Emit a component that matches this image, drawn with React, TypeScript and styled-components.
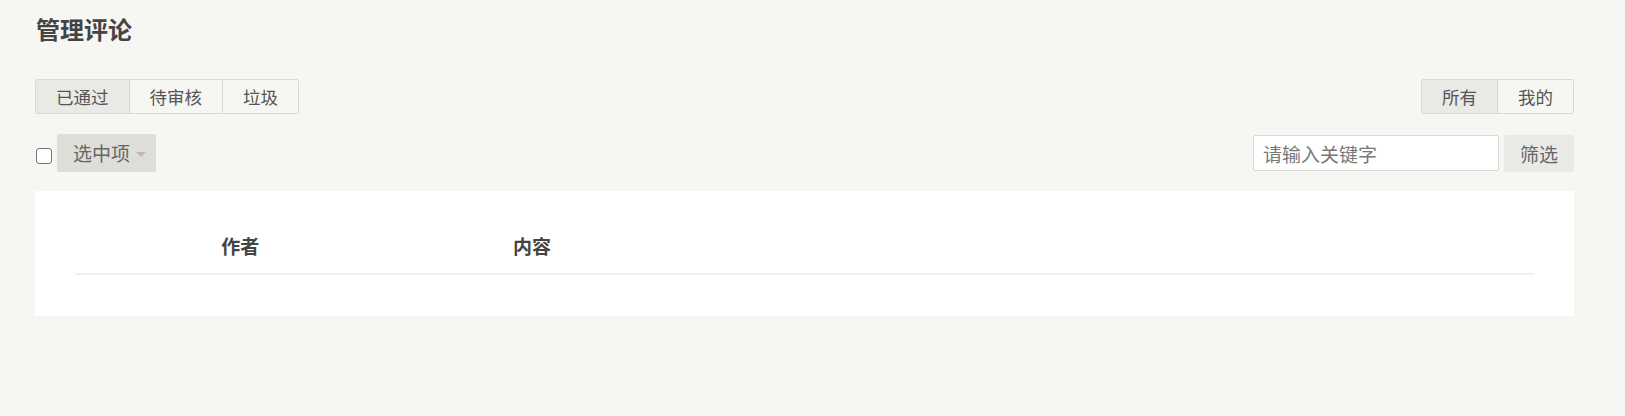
import React from "react";
import styled, { createGlobalStyle } from "styled-components";

const GlobalStyle = createGlobalStyle`
  html, body {
    margin: 0;
    padding: 0;
    background: #f6f6f3;
  }
  body {
    font-family: "Noto Sans CJK SC", "Noto Sans", sans-serif;
    color: #444;
  }
`;

const Page = styled.div`
  padding: 17px 51px 0 35px;
`;

const Title = styled.h2`
  margin: 0;
  font-size: 24px;
  line-height: 24px;
  font-weight: bold;
  color: #444;
  padding-left: 1px;
`;

const Toolbar = styled.div<{ $top: number; $height: number }>`
  display: flex;
  align-items: center;
  justify-content: space-between;
  margin-top: ${({ $top }) => $top}px;
  height: ${({ $height }) => $height}px;
`;

const Group = styled.div`
  display: flex;
  align-items: center;
  gap: 5px;
`;

const Tabs = styled.ul`
  display: flex;
  margin: 0;
  padding: 0;
  list-style: none;
  border: 1px solid #d9d9d6;
  border-radius: 2px;
  overflow: hidden;
`;

const Tab = styled.li<{ $active?: boolean }>`
  padding: 0 20px;
  height: 33px;
  line-height: 33px;
  font-size: 17.5px;
  color: #555;
  background: ${({ $active }) => ($active ? "#e9e9e6" : "#f6f6f3")};
  & + & {
    border-left: 1px solid #d9d9d6;
  }
`;

const CheckBox = styled.input`
  appearance: none;
  margin: 6px 0 0 1px;
  width: 16px;
  height: 16px;
  border: 1px solid #767676;
  border-radius: 3px;
  background: #fff;
  box-sizing: border-box;
`;

const DropButton = styled.button`
  display: flex;
  align-items: center;
  gap: 6px;
  height: 38px;
  padding: 0 10px 0 16px;
  border: none;
  border-radius: 2px;
  background: #deded9;
  color: #666;
  font-family: inherit;
  font-size: 19px;
  line-height: 38px;
`;

const Caret = styled.span`
  width: 0;
  height: 0;
  border-left: 5px solid transparent;
  border-right: 5px solid transparent;
  border-top: 5px solid #bbb;
  margin-top: 2px;
`;

const SearchInput = styled.input`
  box-sizing: border-box;
  width: 246px;
  height: 36px;
  padding: 0 9px;
  border: 1px solid #d9d9d6;
  border-radius: 2px;
  background: #fff;
  font-family: inherit;
  font-size: 19px;
  color: #444;
  outline: none;
  &::placeholder {
    color: #777;
  }
`;

const Button = styled.button`
  height: 37px;
  padding: 0 16px;
  border: none;
  border-radius: 2px;
  background: #e9e9e6;
  color: #666;
  font-family: inherit;
  font-size: 19px;
  line-height: 37px;
`;

const Panel = styled.div`
  margin-top: 19px;
  background: #fff;
  padding: 26px 40px 41px;
`;

const Table = styled.table`
  width: 100%;
  border-collapse: collapse;
  table-layout: fixed;
`;

const Th = styled.th`
  height: 56px;
  padding: 0 15px;
  text-align: left;
  font-size: 19px;
  font-weight: bold;
  color: #444;
  border-bottom: 2px solid #f0f0ec;
`;

export default function App() {
  return (
    <>
      <GlobalStyle />
      <Page>
        <Title>管理评论</Title>

        <Toolbar $top={38} $height={35}>
          <Tabs>
            <Tab $active>已通过</Tab>
            <Tab>待审核</Tab>
            <Tab>垃圾</Tab>
          </Tabs>
          <Tabs>
            <Tab $active>所有</Tab>
            <Tab>我的</Tab>
          </Tabs>
        </Toolbar>

        <Toolbar $top={20} $height={38}>
          <Group>
            <CheckBox type="checkbox" />
            <DropButton>
              选中项
              <Caret />
            </DropButton>
          </Group>
          <Group>
            <SearchInput placeholder="请输入关键字" />
            <Button>筛选</Button>
          </Group>
        </Toolbar>

        <Panel>
          <Table>
            <colgroup>
              <col width="3%" />
              <col width="6%" />
              <col width="20%" />
              <col width="71%" />
            </colgroup>
            <thead>
              <tr>
                <Th />
                <Th />
                <Th>作者</Th>
                <Th>内容</Th>
              </tr>
            </thead>
          </Table>
        </Panel>
      </Page>
    </>
  );
}
